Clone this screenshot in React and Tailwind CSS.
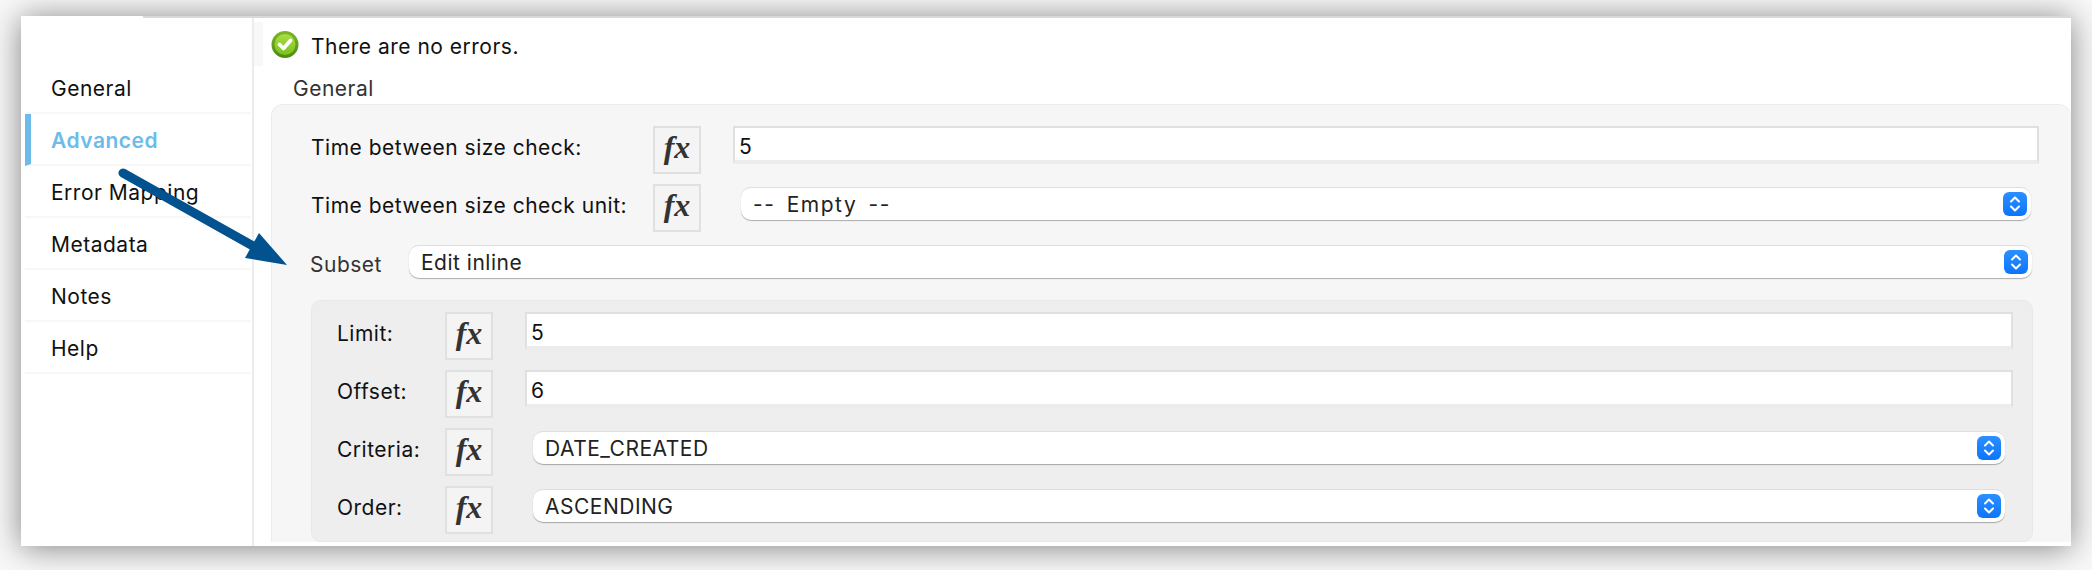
const menuItems = ['General', 'Advanced', 'Error Mapping', 'Metadata', 'Notes', 'Help']

const Fx = () => (
  <div className="flex h-[48px] w-[48px] shrink-0 items-center justify-center border-2 border-[#e0e0e0] bg-[#f4f4f4] pb-[6px] font-['Liberation_Serif',serif] text-[32px] font-bold italic leading-none tracking-normal text-[#333]">
    fx
  </div>
)

const TextField = ({ value, className }) => (
  <div className={`flex h-[38px] items-center border-2 border-b-[4px] border-[#e0e0e0] border-b-[#ececec] bg-white pl-[4px] pt-[5px] text-[#111] ${className}`}>
    {value}
  </div>
)

const SelectField = ({ value, className, valueClass = '' }) => (
  <div className={`flex h-[33px] items-center justify-between rounded-[10px] border-t border-[#dedede] bg-white pl-[12px] pr-[4px] text-[#222] shadow-[0_1px_1px_rgba(0,0,0,0.3)] ${className}`}>
    <span className={`pt-[2px] ${valueClass}`}>{value}</span>
    <span className="flex h-[24px] w-[24px] items-center justify-center rounded-[6px] bg-gradient-to-b from-[#2b8fff] to-[#0a76fb]">
      <svg width="14" height="18" viewBox="0 0 14 18" fill="none" stroke="white" strokeWidth="2" strokeLinecap="round" strokeLinejoin="round">
        <path d="M3 6.5 7 2.5l4 4" />
        <path d="M3 11.5l4 4 4-4" />
      </svg>
    </span>
  </div>
)

const Row = ({ label, labelWidth, children }) => (
  <div className="flex h-[58px] items-start">
    <div className={`flex h-[41px] shrink-0 items-center pt-[2px] text-[#111] ${labelWidth}`}>{label}</div>
    <Fx />
    {children}
  </div>
)

export default function App() {
  return (
    <div className="relative h-[570px] w-full overflow-hidden bg-[#f8f8f8] px-[21px] pt-[16px] font-['Inter','Liberation_Sans',sans-serif] text-[21px] tracking-[0.5px]">
      <div className="flex h-[530px] flex-col overflow-hidden bg-white shadow-[0_2px_30px_rgba(0,0,0,0.48)]">
        <div className="flex h-[2px] shrink-0">
          <div className="w-[122px] bg-white" />
          <div className="flex-1 bg-[#d9d9d9]" />
        </div>

        <div className="flex min-h-0 flex-1">
          {/* Sidebar */}
          <aside className="w-[233px] shrink-0 border-r-2 border-[#ececec] pl-[4px] pr-[1px] pt-[44px]">
            {menuItems.map((item) => (
              <div
                key={item}
                className={
                  item === 'Advanced'
                    ? 'flex h-[52px] items-center border-b-2 border-l-[6px] border-[#f7f7f7] border-l-[#6cbbe8] pl-[20px] pt-[4px] font-semibold text-[#6cbbe8]'
                    : 'flex h-[52px] items-center border-b-2 border-[#f7f7f7] pl-[26px] pt-[4px] text-[#111]'
                }
              >
                {item}
              </div>
            ))}
          </aside>

          {/* Main content */}
          <main className="min-w-0 flex-1">
            <div className="mt-[4px] flex h-[44px] items-center">
              <div className="h-[44px] w-[9px] bg-[#f8f8f8]" />
              <svg className="ml-[8px]" width="28" height="29" viewBox="0 0 28 29">
                <defs>
                  <linearGradient id="okRing" x1="0" y1="0" x2="0" y2="1">
                    <stop offset="0" stopColor="#7fb52a" />
                    <stop offset="1" stopColor="#4c8a10" />
                  </linearGradient>
                  <linearGradient id="okGreen" x1="0" y1="0" x2="0" y2="1">
                    <stop offset="0" stopColor="#a9dd45" />
                    <stop offset="1" stopColor="#7cc01f" />
                  </linearGradient>
                </defs>
                <circle cx="14" cy="14.5" r="13.5" fill="url(#okRing)" />
                <circle cx="14" cy="14.5" r="10.5" fill="url(#okGreen)" />
                <path d="M8.5 14.5l4 4 7-8" fill="none" stroke="white" strokeWidth="3.8" strokeLinecap="round" strokeLinejoin="round" />
              </svg>
              <span className="ml-[12px] mt-[6px] text-[#111]">There are no errors.</span>
            </div>

            <div className="flex h-[38px] items-center pl-[39px] pt-[7px] text-[#333]">General</div>

            <section className="ml-[17px] rounded-t-[12px] border-l border-t border-[#ececec] bg-[#f6f6f6] pl-[39px] pt-[21px]">
              <Row label="Time between size check:" labelWidth="w-[342px]">
                <TextField value="5" className="ml-[32px] w-[1306px]" />
              </Row>
              <Row label="Time between size check unit:" labelWidth="w-[342px]">
                <SelectField value="-- Empty --" valueClass="tracking-[1.5px] [word-spacing:4px]" className="ml-[40px] mt-[3px] w-[1290px]" />
              </Row>

              <div className="flex h-[58px] items-start">
                <div className="-ml-[1px] flex h-[38px] w-[99px] items-center pt-[8px] text-[#333]">Subset</div>
                <SelectField value="Edit inline" className="mt-[3px] w-[1623px]" />
              </div>

              {/* Nested subset fields */}
              <div className="h-[242px] w-[1722px] rounded-[10px] border border-[#e8e8e8] bg-[#eeeeee] pl-[25px] pt-[11px]">
                <Row label="Limit:" labelWidth="w-[108px]">
                  <TextField value="5" className="ml-[32px] w-[1488px]" />
                </Row>
                <Row label="Offset:" labelWidth="w-[108px]">
                  <TextField value="6" className="ml-[32px] w-[1488px]" />
                </Row>
                <Row label="Criteria:" labelWidth="w-[108px]">
                  <SelectField value="DATE_CREATED" className="ml-[40px] mt-[3px] w-[1472px]" />
                </Row>
                <Row label="Order:" labelWidth="w-[108px]">
                  <SelectField value="ASCENDING" className="ml-[40px] mt-[3px] w-[1472px]" />
                </Row>
              </div>
            </section>
          </main>
        </div>
      </div>

      {/* Annotation arrow over the sidebar */}
      <svg className="absolute left-0 top-0" width="300" height="280" viewBox="0 0 300 280">
        <path d="M123 173 253 246" stroke="#02528f" strokeWidth="9" strokeLinecap="round" fill="none" />
        <path d="M259 233 287 265 245 258Z" fill="#02528f" />
      </svg>
    </div>
  )
}
